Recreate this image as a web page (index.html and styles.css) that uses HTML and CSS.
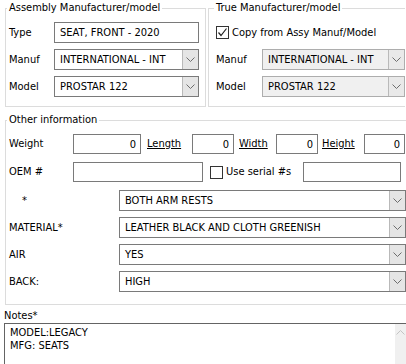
FILE: index.html
```html
<!DOCTYPE html>
<html lang="en">
<head>
  <meta charset="UTF-8">
  <title>Seat details</title>
  <link rel="stylesheet" href="styles.css">
</head>
<body>
  <div class="top">
    <fieldset class="group assy">
      <legend>Assembly Manufacturer/model</legend>
      <div class="row">
        <span class="lbl">Type</span>
        <div class="box">SEAT, FRONT - 2020</div>
      </div>
      <div class="row">
        <span class="lbl">Manuf</span>
        <div class="combo"><span class="val">INTERNATIONAL - INT</span><span class="drop"><svg width="9" height="5" viewBox="0 0 9 5"><polyline points="0.5,0.5 4.5,4.5 8.5,0.5" fill="none" stroke="#6d6d6d" stroke-width="1"/></svg></span></div>
      </div>
      <div class="row">
        <span class="lbl">Model</span>
        <div class="combo"><span class="val">PROSTAR 122</span><span class="drop"><svg width="9" height="5" viewBox="0 0 9 5"><polyline points="0.5,0.5 4.5,4.5 8.5,0.5" fill="none" stroke="#6d6d6d" stroke-width="1"/></svg></span></div>
      </div>
    </fieldset>

    <fieldset class="group true">
      <legend>True Manufacturer/model</legend>
      <div class="row">
        <span class="check on"><svg width="11" height="11" viewBox="0 0 11 11"><polyline points="1.5,5.5 4,8.5 9.5,1.5" fill="none" stroke="#222" stroke-width="1.2"/></svg></span>
        <span class="check-text">Copy from Assy Manuf/Model</span>
      </div>
      <div class="row">
        <span class="lbl">Manuf</span>
        <div class="combo off"><span class="val">INTERNATIONAL - INT</span><span class="drop"><svg width="9" height="5" viewBox="0 0 9 5"><polyline points="0.5,0.5 4.5,4.5 8.5,0.5" fill="none" stroke="#6d6d6d" stroke-width="1"/></svg></span></div>
      </div>
      <div class="row">
        <span class="lbl">Model</span>
        <div class="combo off"><span class="val">PROSTAR 122</span><span class="drop"><svg width="9" height="5" viewBox="0 0 9 5"><polyline points="0.5,0.5 4.5,4.5 8.5,0.5" fill="none" stroke="#6d6d6d" stroke-width="1"/></svg></span></div>
      </div>
    </fieldset>
  </div>

  <fieldset class="group other">
    <legend>Other information</legend>
    <div class="row short">
      <span class="lbl wide">Weight</span>
      <div class="box num w-weight">0</div>
      <span class="link l-len">Length</span>
      <div class="box num w-len">0</div>
      <span class="link l-wid">Width</span>
      <div class="box num w-wid">0</div>
      <span class="link l-hgt">Height</span>
      <div class="box num w-hgt">0</div>
    </div>
    <div class="row short">
      <span class="lbl wide">OEM #</span>
      <div class="box w-oem"></div>
      <span class="check serial"></span>
      <span class="check-text serial-text">Use serial #s</span>
      <div class="box w-serial"></div>
    </div>
    <div class="row sel">
      <span class="lbl attr star">*</span>
      <div class="combo"><span class="val">BOTH ARM RESTS</span><span class="drop"><svg width="9" height="5" viewBox="0 0 9 5"><polyline points="0.5,0.5 4.5,4.5 8.5,0.5" fill="none" stroke="#6d6d6d" stroke-width="1"/></svg></span></div>
    </div>
    <div class="row sel">
      <span class="lbl attr">MATERIAL*</span>
      <div class="combo"><span class="val">LEATHER BLACK AND CLOTH GREENISH</span><span class="drop"><svg width="9" height="5" viewBox="0 0 9 5"><polyline points="0.5,0.5 4.5,4.5 8.5,0.5" fill="none" stroke="#6d6d6d" stroke-width="1"/></svg></span></div>
    </div>
    <div class="row sel">
      <span class="lbl attr">AIR</span>
      <div class="combo"><span class="val">YES</span><span class="drop"><svg width="9" height="5" viewBox="0 0 9 5"><polyline points="0.5,0.5 4.5,4.5 8.5,0.5" fill="none" stroke="#6d6d6d" stroke-width="1"/></svg></span></div>
    </div>
    <div class="row sel last">
      <span class="lbl attr">BACK:</span>
      <div class="combo"><span class="val">HIGH</span><span class="drop"><svg width="9" height="5" viewBox="0 0 9 5"><polyline points="0.5,0.5 4.5,4.5 8.5,0.5" fill="none" stroke="#6d6d6d" stroke-width="1"/></svg></span></div>
    </div>
  </fieldset>

  <div class="notes-label">Notes*</div>
  <div class="notes">
    <div class="notes-text">MODEL:LEGACY<br>MFG: SEATS</div>
    <div class="scroll"><svg width="9" height="5" viewBox="0 0 9 5"><polyline points="0.5,4.5 4.5,0.5 8.5,4.5" fill="none" stroke="#c4c4c4" stroke-width="1"/></svg></div>
  </div>
</body>
</html>
```

FILE: styles.css
```css
body {
  margin: 0;
  background-color: #fff;
  color: #000;
  font-family: "DejaVu Sans Condensed", "DejaVu Sans", sans-serif;
  font-size: 11px;
  line-height: 14px;
  overflow: hidden;
  width: 406px;
  height: 364px;
}

.top {
  display: flex;
  padding: 1px 0 0 5px;
}

.group {
  box-sizing: border-box;
  margin: 0;
  border: 1px solid #dcdcdc;
  min-width: 0;
  flex-shrink: 0;
}

.group legend {
  padding: 0 2px;
  margin-left: -2px;
  line-height: 14px;
}

.assy {
  width: 201px;
  padding: 7px 6px 9px 3px;
}

.true {
  width: 197px;
  margin-left: 2px;
  padding: 7px 0 9px 7px;
  border-right: none;
}

.other {
  width: 401px;
  margin: 6px 0 0 5px;
  padding: 7px 0 12px 3px;
  border-right: none;
}

.row {
  display: flex;
  align-items: center;
  height: 21px;
  margin-bottom: 6px;
}

.row:last-child {
  margin-bottom: 0;
}

.row.short {
  height: 20px;
  margin-bottom: 8px;
}

.lbl {
  width: 45px;
  flex-shrink: 0;
}

.true .lbl {
  width: 46px;
}

.lbl.wide {
  width: 64px;
}

.lbl.attr {
  width: 110px;
}

.lbl.star {
  box-sizing: border-box;
  padding-left: 13px;
}

.box {
  box-sizing: border-box;
  height: 100%;
  flex: 1;
  border: 1px solid #7a7a7a;
  padding: 2px 5px;
  line-height: 15px;
  white-space: nowrap;
}

.box.num {
  flex: none;
  text-align: right;
  padding-right: 4px;
}

.w-weight { width: 68px; }
.w-len { width: 42px; }
.w-wid { width: 42px; }
.w-hgt { width: 41px; }
.w-oem { flex: none; width: 130px; }
.w-serial { flex: none; width: 98px; }

.link {
  box-sizing: border-box;
  text-decoration: underline;
  flex-shrink: 0;
}

.l-len { width: 51px; padding-left: 6px; }
.l-wid { width: 42px; padding-left: 5px; }
.l-hgt { width: 46px; padding-left: 4px; }

.combo {
  box-sizing: border-box;
  height: 100%;
  flex: 1;
  display: flex;
  border: 1px solid #7a7a7a;
  background-color: #fff;
}

.combo.off {
  background-color: #f0f0f0;
  border-color: #adadad;
}

.combo .val {
  flex: 1;
  padding: 2px 5px;
  line-height: 15px;
  white-space: nowrap;
  overflow: hidden;
}

.drop {
  width: 15px;
  display: flex;
  align-items: center;
  justify-content: center;
  background-color: #e5e5e5;
  border-left: 1px solid #b9b9b9;
}

.combo.off .drop {
  background-color: #e9e9e9;
}

.check {
  box-sizing: border-box;
  width: 13px;
  height: 13px;
  border: 1px solid #333;
  background-color: #fff;
  display: flex;
  align-items: center;
  justify-content: center;
  flex-shrink: 0;
}

.check-text {
  margin-left: 3px;
  white-space: nowrap;
}

.check.serial {
  margin-left: 7px;
}

.serial-text {
  width: 77px;
  flex-shrink: 0;
}

.notes-label {
  margin: 4px 0 0 4px;
}

.notes {
  box-sizing: border-box;
  display: flex;
  width: 402px;
  height: 41px;
  margin-left: 4px;
  border: 1px solid #646464;
  border-right: none;
  border-bottom: none;
  background-color: #fff;
}

.notes-text {
  flex: 1;
  padding: 2px 5px;
  line-height: 13px;
}

.scroll {
  width: 11px;
  background-color: #f0f0f0;
  display: flex;
  justify-content: center;
  align-items: flex-start;
  padding-top: 6px;
}
```
